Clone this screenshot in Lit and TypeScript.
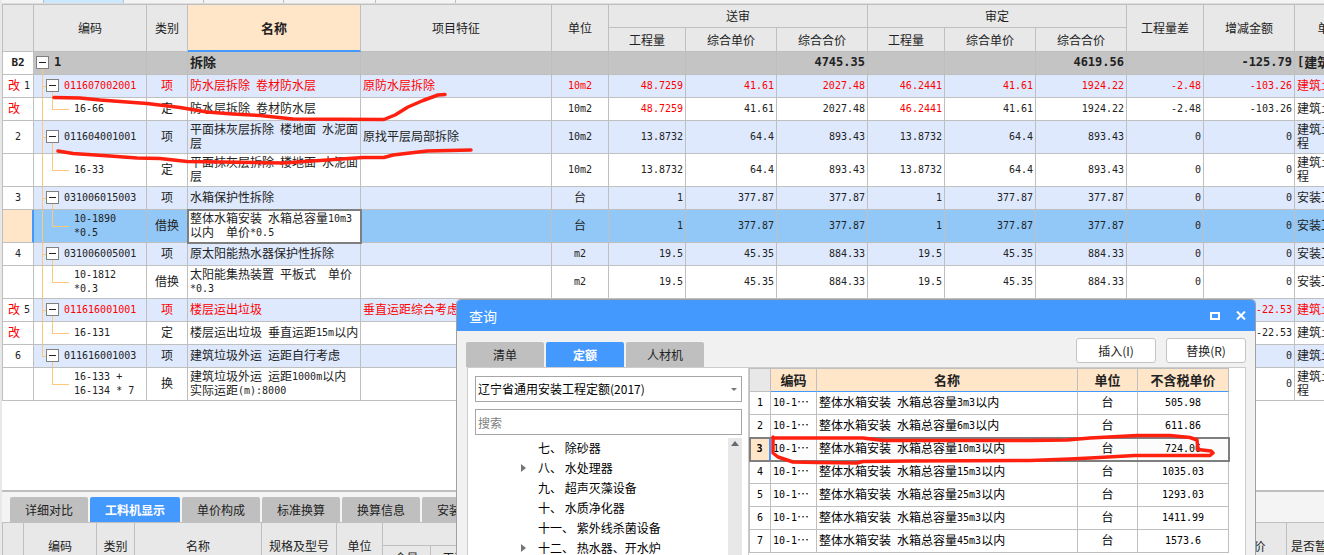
import { LitElement, html, css, svg, nothing } from "lit";
import { customElement, property, state } from "lit/decorators.js";
import { classMap } from "lit/directives/class-map.js";

/** Splits a label into Latin and Chinese runs so that Latin glyphs take half a Chinese cell. */
function mixed(text: string) {
  return text
    .split(/([\x21-\x7e\x20]+)/)
    .filter((part) => part !== "")
    .map((part) => (/^[\x20-\x7e]+$/.test(part) ? html`<span class="half">${part}</span>` : part));
}

interface Row {
  kind: "group" | "item" | "leaf";
  no: string;
  changed?: boolean;
  code: string;
  type: string;
  name: string;
  feature?: string;
  unit?: string;
  values: string[];
  file: string;
  red?: boolean;
  redCols?: number[];
  selected?: boolean;
  last?: boolean;
}

const ROWS: Row[] = [
  { kind: "group", no: "B2", code: "1", type: "", name: "拆除", values: ["", "", "4745.35", "", "", "4619.56", "", "-125.79"], file: "[建筑土建工程]" },
  { kind: "item", no: "1", changed: true, code: "011607002001", type: "项", name: "防水层拆除 卷材防水层", feature: "原防水层拆除", unit: "10m2", values: ["48.7259", "41.61", "2027.48", "46.2441", "41.61", "1924.22", "-2.48", "-103.26"], file: "建筑土建工程", red: true },
  { kind: "leaf", no: "", changed: true, code: "16-66", type: "定", name: "防水层拆除 卷材防水层", unit: "10m2", values: ["48.7259", "41.61", "2027.48", "46.2441", "41.61", "1924.22", "-2.48", "-103.26"], file: "建筑土建工程", redCols: [0, 3] },
  { kind: "item", no: "2", code: "011604001001", type: "项", name: "平面抹灰层拆除 楼地面 水泥面\n层", feature: "原找平层局部拆除", unit: "10m2", values: ["13.8732", "64.4", "893.43", "13.8732", "64.4", "893.43", "0", "0"], file: "建筑土建工\n程" },
  { kind: "leaf", no: "", code: "16-33", type: "定", name: "平面抹灰层拆除 楼地面 水泥面\n层", unit: "10m2", values: ["13.8732", "64.4", "893.43", "13.8732", "64.4", "893.43", "0", "0"], file: "建筑土建工\n程" },
  { kind: "item", no: "3", code: "031006015003", type: "项", name: "水箱保护性拆除", unit: "台", values: ["1", "377.87", "377.87", "1", "377.87", "377.87", "0", "0"], file: "安装工程" },
  { kind: "leaf", no: "", code: "10-1890\n*0.5", type: "借换", name: "整体水箱安装 水箱总容量10m3\n以内  单价*0.5", unit: "台", values: ["1", "377.87", "377.87", "1", "377.87", "377.87", "0", "0"], file: "安装工程", selected: true },
  { kind: "item", no: "4", code: "031006005001", type: "项", name: "原太阳能热水器保护性拆除", unit: "m2", values: ["19.5", "45.35", "884.33", "19.5", "45.35", "884.33", "0", "0"], file: "安装工程" },
  { kind: "leaf", no: "", code: "10-1812\n*0.3", type: "借换", name: "太阳能集热装置 平板式  单价\n*0.3", unit: "m2", values: ["19.5", "45.35", "884.33", "19.5", "45.35", "884.33", "0", "0"], file: "安装工程" },
  { kind: "item", no: "5", changed: true, code: "011616001001", type: "项", name: "楼层运出垃圾", feature: "垂直运距综合考虑", values: ["", "", "", "", "", "", "", "-22.53"], file: "建筑土建工程", red: true },
  { kind: "leaf", no: "", changed: true, code: "16-131", type: "定", name: "楼层运出垃圾 垂直运距15m以内", values: ["", "", "", "", "", "", "", "-22.53"], file: "建筑土建工程" },
  { kind: "item", no: "6", code: "011616001003", type: "项", name: "建筑垃圾外运 运距自行考虑", values: ["", "", "", "", "", "", "", "0"], file: "建筑土建工程", last: true },
  { kind: "leaf", no: "", code: "16-133 +\n16-134 * 7", type: "换", name: "建筑垃圾外运 运距1000m以内\n实际运距(m):8000", values: ["", "", "", "", "", "", "", "0"], file: "建筑土建工\n程", last: true },
];

const tableStyles = css`
  :host {
    display: block;
    font: 12px/14px "Noto Sans CJK SC", sans-serif;
    color: #222;
  }
  * {
    box-sizing: border-box;
  }
  .half {
    font-family: "DejaVu Sans Mono", monospace;
    font-size: 10px;
    line-height: 10px;
    vertical-align: 1px;
  }
  table {
    table-layout: fixed;
    border-collapse: separate;
    border-spacing: 0;
    border: 0 solid #bfbfbf;
    border-width: 1px 0 0 1px;
  }
  th,
  td {
    height: 23px;
    padding: 1px 2px 3px;
    border: 0 solid #bfbfbf;
    border-width: 0 1px 1px 0;
    white-space: pre;
    text-align: center;
    overflow: hidden;
  }
  th {
    padding: 2px;
    background: #e8e8e8;
    font-weight: 400;
  }
  button {
    font: inherit;
    color: inherit;
    padding: 0;
    border: 0;
  }
`;

@customElement("budget-grid")
class BudgetGrid extends LitElement {
  static styles = [
    tableStyles,
    css`
      .w-no { width: 31px; }
      .w-code { width: 113px; }
      .w-type { width: 41px; }
      .w-name { width: 173px; }
      .w-feature { width: 191px; }
      .w-unit { width: 57px; }
      .w-qty { width: 77px; }
      .w-sum { width: 91px; }
      .w-file { width: 70px; }
      table {
        width: 1363px;
      }
      .sub th {
        height: 24px;
      }
      th.current {
        background: #ffe6c8;
        border-bottom: 2px solid #4499ff;
        font-size: 13px;
        font-weight: 700;
      }
      .item td { background-color: #dee9fd; }
      .group td {
        background-color: #c4c4c4;
        font-size: 13px;
        font-weight: 700;
      }
      .group .half {
        font-size: 12px;
        line-height: 12px;
      }
      .group td.no .half { font-size: 11px; }
      .selected td { background-color: #92c8f7; }
      td.no { background-color: #fff; }
      .selected td.no {
        background-color: #ffe6c8;
        border-right: 2px solid #4499ff;
      }
      .selected td.name {
        background-color: #fff;
        outline: 2px solid #7f7f7f;
        outline-offset: -1px;
      }
      .marks {
        display: grid;
        grid-template-columns: 1fr;
        align-items: center;
      }
      .marks.changed {
        grid-template-columns: 18px 1fr;
      }
      .mark,
      .red { color: #f00; }
      .left { text-align: left; }
      .num { text-align: right; }
      .node {
        display: flex;
        align-items: center;
        gap: 5px;
        text-align: left;
      }
      .item .node { padding-left: 10px; }
      .leaf .node { padding-left: 38px; }
      td.code {
        background-repeat: no-repeat;
      }
      .group td.code {
        background-image: linear-gradient(#ffc878, #ffc878);
        background-size: 1px 50%;
        background-position: 8px 100%;
      }
      .item td.code {
        background-image: linear-gradient(#ffc878, #ffc878), linear-gradient(#ffc878, #ffc878), linear-gradient(#ffc878, #ffc878);
        background-size: 1px 100%, 4px 1px, 1px 50%;
        background-position: 8px 0, 8px 50%, 18px 100%;
      }
      .item.last td.code {
        background-size: 1px 50%, 4px 1px, 1px 50%;
      }
      .leaf td.code {
        background-image: linear-gradient(#ffc878, #ffc878), linear-gradient(#ffc878, #ffc878), linear-gradient(#ffc878, #ffc878);
        background-size: 1px 50%, 17px 1px, 1px 100%;
        background-position: 18px 0, 18px 50%, 8px 0;
      }
      .leaf.last td.code {
        background-size: 1px 50%, 17px 1px, 0 0;
      }
      .toggle {
        flex: none;
        width: 13px;
        height: 13px;
        display: grid;
        place-items: center;
        background: #fff;
        border: 1px solid #808080;
      }
      .toggle::before {
        content: "";
        width: 7px;
        height: 1px;
        background: #222;
      }
    `,
  ];

  private renderRow(r: Row) {
    const rowClass = classMap({ [r.kind]: true, selected: !!r.selected, last: !!r.last });
    const tone = r.red ? "red" : "";
    return html`<tr class=${rowClass}>
      <td class="no"><div class=${classMap({ marks: true, changed: !!r.changed })}>${r.changed ? html`<span class="mark">改</span>` : nothing}<span>${mixed(r.no)}</span></div></td>
      <td class="code"><div class="node ${tone}">${r.kind === "leaf" ? nothing : html`<button class="toggle" aria-label="折叠 ${r.code}"></button>`}<span>${r.code.split("\n").map((line, i) => [i ? "\n" : "", mixed(line)])}</span></div></td>
      <td class=${tone}>${r.type}</td>
      <td class="name left ${tone}">${mixed(r.name)}</td>
      <td class="left ${tone}">${mixed(r.feature ?? "")}</td>
      <td class=${tone}>${mixed(r.unit ?? "")}</td>
      ${r.values.map((v, i) => html`<td class=${classMap({ num: true, red: !!r.red || !!r.redCols?.includes(i) })}>${mixed(v)}</td>`)}
      <td class="left ${tone}">${mixed(r.file)}</td>
    </tr>`;
  }

  render() {
    return html`<table>
      <colgroup>
        <col class="w-no" /><col class="w-code" /><col class="w-type" /><col class="w-name" /><col class="w-feature" /><col class="w-unit" />
        <col class="w-qty" /><col class="w-sum" /><col class="w-sum" /><col class="w-qty" /><col class="w-sum" /><col class="w-sum" />
        <col class="w-qty" /><col class="w-sum" /><col class="w-file" />
      </colgroup>
      <thead>
        <tr>
          <th rowspan="2"></th>
          <th rowspan="2">编码</th>
          <th rowspan="2">类别</th>
          <th rowspan="2" class="current">名称</th>
          <th rowspan="2">项目特征</th>
          <th rowspan="2">单位</th>
          <th colspan="3">送审</th>
          <th colspan="3">审定</th>
          <th rowspan="2">工程量差</th>
          <th rowspan="2">增减金额</th>
          <th rowspan="2">单价</th>
        </tr>
        <tr class="sub">
          <th>工程量</th><th>综合单价</th><th>综合合价</th>
          <th>工程量</th><th>综合单价</th><th>综合合价</th>
        </tr>
      </thead>
      <tbody>${ROWS.map((r) => this.renderRow(r))}</tbody>
    </table>`;
  }
}

@customElement("tab-strip")
class TabStrip extends LitElement {
  @property({ attribute: false }) tabs: string[] = [];
  @property({ type: Number }) active = 0;
  @property({ type: Boolean, reflect: true }) grow = false;

  static styles = css`
    :host {
      display: flex;
      gap: 2px;
    }
    .tab {
      flex: none;
      width: 78px;
      height: 25px;
      padding: 0;
      border: 0;
      border-radius: 2px 2px 0 0;
      background: #bfbfbf;
      color: #222;
      font: 12px/16px "Noto Sans CJK SC", sans-serif;
    }
    .tab.active {
      background: #4499ff;
      color: #fff;
      font-weight: 700;
    }
    :host([grow]) .tab.active {
      width: 90px;
    }
  `;

  render() {
    return html`${this.tabs.map(
      (t, i) => html`<button class=${classMap({ tab: true, active: i === this.active })} @click=${() => (this.active = i)}>${t}</button>`,
    )}`;
  }
}

@customElement("resource-grid")
class ResourceGrid extends LitElement {
  static styles = [
    tableStyles,
    css`
      .w21 { width: 21px; }
      .w73 { width: 73px; }
      .w38 { width: 38px; }
      .w127 { width: 127px; }
      .w75 { width: 75px; }
      .w46 { width: 46px; }
      .w48 { width: 48px; }
      .wide { width: 706px; }
      .w102 { width: 102px; }
      .w57 { width: 57px; }
      table {
        width: 1342px;
      }
      .sub th {
        height: 24px;
      }
    `,
  ];

  render() {
    return html`<table>
      <colgroup>
        <col class="w21" /><col class="w73" /><col class="w38" /><col class="w127" /><col class="w75" /><col class="w46" />
        <col class="w48" /><col class="w48" /><col class="wide" /><col class="w102" /><col class="w57" />
      </colgroup>
      <thead>
        <tr>
          <th rowspan="2"></th>
          <th rowspan="2">编码</th>
          <th rowspan="2">类别</th>
          <th rowspan="2">名称</th>
          <th rowspan="2">规格及型号</th>
          <th rowspan="2">单位</th>
          <th colspan="2"></th>
          <th rowspan="2"></th>
          <th rowspan="2">含税市场价</th>
          <th rowspan="2">是否暂估</th>
        </tr>
        <tr class="sub"><th>含量</th><th>工程</th></tr>
      </thead>
    </table>`;
  }
}

const QUOTAS: [string, string][] = [
  ["3", "505.98"],
  ["6", "611.86"],
  ["10", "724.06"],
  ["15", "1035.03"],
  ["25", "1293.03"],
  ["35", "1411.99"],
  ["45", "1573.6"],
];

@customElement("quota-grid")
class QuotaGrid extends LitElement {
  @state() private current = 2;

  static styles = [
    tableStyles,
    css`
      :host { color: #000; }
      table { width: 480px; }
      .w-no { width: 21px; }
      .w-code { width: 46px; }
      .w-unit { width: 60px; }
      .w-price { width: 91px; }
      th {
        background: #ffe6c8;
        border-bottom-color: #4499ff;
        color: #222;
        font-size: 13px;
        font-weight: 700;
      }
      th.corner {
        background: #e8e8e8;
        border-bottom-color: #bfbfbf;
      }
      .left { text-align: left; }
      .current {
        outline: 2px solid #7f7f7f;
        outline-offset: -1px;
      }
      .current td { background: #fcfcfc; }
      .current .no {
        background: #ffe6c8;
        border-right: 2px solid #4499ff;
        font-weight: 700;
      }
    `,
  ];

  render() {
    return html`<table>
      <colgroup><col class="w-no" /><col class="w-code" /><col /><col class="w-unit" /><col class="w-price" /></colgroup>
      <thead>
        <tr><th class="corner"></th><th>编码</th><th>名称</th><th>单位</th><th>不含税单价</th></tr>
      </thead>
      <tbody>
        ${QUOTAS.map(
          ([size, price], i) => html`<tr class=${classMap({ current: i === this.current })} @click=${() => (this.current = i)}>
            <td class="no">${mixed(String(i + 1))}</td>
            <td class="left">${mixed("10-1⋯")}</td>
            <td class="left">${mixed(`整体水箱安装 水箱总容量${size}m3以内`)}</td>
            <td>台</td>
            <td>${mixed(price)}</td>
          </tr>`,
        )}
      </tbody>
    </table>`;
  }
}

const CHAPTERS = [
  { text: "七、 除砂器" },
  { text: "八、 水处理器", branch: true },
  { text: "九、 超声灭藻设备" },
  { text: "十、 水质净化器" },
  { text: "十一、 紫外线杀菌设备" },
  { text: "十二、 热水器、开水炉", branch: true },
];

@customElement("query-dialog")
class QueryDialog extends LitElement {
  static styles = css`
    :host {
      display: flex;
      flex-direction: column;
      box-sizing: border-box;
      overflow: hidden;
      border: 1px solid #a0a0a0;
      border-bottom: 0;
      border-radius: 5px 5px 0 0;
      background: #f1f1f1;
      font: 12px/16px "Noto Sans CJK SC", sans-serif;
      color: #000;
    }
    * { box-sizing: border-box; }
    .title {
      flex: none;
      display: flex;
      align-items: center;
      height: 31px;
      padding: 0 8px 0 12px;
      background: #4499ff;
      color: #fff;
      font-size: 14px;
    }
    .title span { flex: 1; }
    .title button {
      display: grid;
      place-items: center;
      width: 26px;
      height: 20px;
      padding: 0;
      border: 0;
      background: none;
    }
    .title button + button { width: 12px; margin-left: 7px; }
    .bar {
      flex: none;
      display: flex;
      align-items: flex-end;
      gap: 10px;
      height: 36px;
      padding: 0 9px;
    }
    .bar tab-strip { flex: 1; }
    .action {
      width: 80px;
      height: 25px;
      margin-bottom: 4px;
      padding: 0;
      border: 1px solid #c4c4c4;
      border-radius: 3px;
      background: #fff;
      color: #222;
      font: inherit;
    }
    .body {
      flex: 1;
      min-height: 0;
      display: flex;
      margin: 0 9px 0 10px;
      border: 1px solid #ccc;
      border-bottom: 0;
      background: #fff;
    }
    .side {
      flex: 1;
      min-width: 0;
      display: flex;
      flex-direction: column;
      padding: 8px 6px 0 7px;
      border-right: 1px solid #ccc;
    }
    .pick { display: grid; margin-bottom: 7px; }
    .pick select,
    .pick svg { grid-area: 1 / 1; }
    .pick svg {
      align-self: center;
      justify-self: end;
      margin-right: 5px;
      pointer-events: none;
    }
    .field {
      width: 100%;
      height: 26px;
      padding: 0 2px;
      border: 1px solid #a6a6a6;
      border-radius: 0;
      background: #fff;
      color: #000;
      font: inherit;
      appearance: none;
      outline: 0;
    }
    .field::placeholder { color: #808080; }
    .list {
      flex: 1;
      min-height: 0;
      display: flex;
      margin-top: 3px;
    }
    .tree {
      flex: 1;
      margin: 0;
      padding: 0 0 0 46px;
      list-style: none;
    }
    .tree li {
      display: grid;
      grid-template-columns: 17px 1fr;
      align-items: center;
      height: 20px;
      white-space: pre;
    }
    .track {
      width: 14px;
      padding-top: 3px;
      background: #e8e8e8;
      display: flex;
      justify-content: center;
    }
    quota-grid { flex: 0 0 496px; }
  `;

  render() {
    return html`
      <div class="title">
        <span>查询</span>
        <button aria-label="最大化"><svg width="10" height="8"><rect x="1" y="1" width="8" height="6" fill="none" stroke="#fff" stroke-width="2" /></svg></button>
        <button aria-label="关闭"><svg width="10" height="9"><path d="M1 .5 9 8.5M9 .5 1 8.5" stroke="#fff" stroke-width="2" /></svg></button>
      </div>
      <div class="bar">
        <tab-strip .tabs=${["清单", "定额", "人材机"]} .active=${1}></tab-strip>
        <button class="action">插入(I)</button>
        <button class="action">替换(R)</button>
      </div>
      <div class="body">
        <div class="side">
          <div class="pick">
            <select class="field" aria-label="定额库"><option>辽宁省通用安装工程定额(2017)</option></select>
            <svg width="6" height="3"><path d="M0 0H6L3 3Z" fill="#777" /></svg>
          </div>
          <input class="field" type="text" placeholder="搜索" aria-label="搜索" />
          <div class="list">
            <ul class="tree">
              ${CHAPTERS.map(
                (c) => html`<li>${c.branch ? html`<svg width="5" height="8"><path d="M0 0 5 4 0 8Z" fill="#777" /></svg>` : html`<i></i>`}<span>${c.text}</span></li>`,
              )}
            </ul>
            <div class="track"><svg width="8" height="5"><path d="M4 0 8 5H0Z" fill="#666a70" /></svg></div>
          </div>
        </div>
        <quota-grid></quota-grid>
      </div>
    `;
  }
}

/** Freehand pen strokes laid over the sheet. */
const STROKES = [
  "M54 97.5 80 98 100 100 147 103.5 180 107.5 207 112 233 114 260 115.5 293 119 384 119.5 395 115 408 107 423 100.5 438 95 445 94.5",
  "M58 151 73 153.5 110 156 137 158 160 158.5 187 161.5 283 163 320 160.5 363 157.5 384 157.5 393 155 427 151 471 150",
  "M773 437V453L778 457 793 462 817 462.5 857 463 863 461.5 910 461 1030 460.5 1070 459 1090 458 1135 455.5H1210L1213 453 1211 451 1198 449.5 1197 440 1190 437.5 1170 435.5H1137L1090 438 1067 440 1030 440.5H883L863 438H775",
];

@customElement("app-root")
class AppRoot extends LitElement {
  static styles = css`
    * {
      box-sizing: border-box;
    }
    :host {
      position: relative;
      display: flex;
      flex-direction: column;
      height: 100vh;
      overflow: hidden;
      padding-left: 2px;
      box-sizing: border-box;
      background: #e8e8e8;
    }
    .strip {
      flex: none;
      display: flex;
      height: 4px;
      background: #f4f4f4;
      border-bottom: 1px solid #dcdcdc;
    }
    .strip i {
      flex: none;
      width: 80px;
      border-right: 1px solid #bfbfbf;
    }
    .strip .first { width: 42px; }
    .strip .wide { width: 92px; }
    .strip .on { background: #cce8ff; }
    .sheet {
      flex: 1;
      min-height: 0;
      overflow: hidden;
      background: #fff;
    }
    .panel {
      flex: 0 0 65px;
      overflow: hidden;
      border-top: 2px solid #bfbfbf;
      background: #f4f4f4;
    }
    .panel tab-strip { padding: 5px 8px 0; }
    query-dialog {
      position: absolute;
      left: 456px;
      top: 299px;
      bottom: 0;
      width: 800px;
    }
    .ink {
      position: absolute;
      left: 0;
      top: 0;
      width: 100%;
      height: 100%;
      pointer-events: none;
      fill: none;
      stroke: #ff2010;
      stroke-width: 3.5;
      stroke-linecap: round;
      stroke-linejoin: round;
    }
  `;

  render() {
    return html`
      <div class="strip"><i class="first"></i><i class="on"></i><i></i><i></i><i class="wide"></i><i></i></div>
      <div class="sheet"><budget-grid></budget-grid></div>
      <div class="panel">
        <tab-strip grow .tabs=${["详细对比", "工料机显示", "单价构成", "标准换算", "换算信息", "安装费用"]} .active=${1}></tab-strip>
        <resource-grid></resource-grid>
      </div>
      <query-dialog></query-dialog>
      <svg class="ink" aria-hidden="true">${STROKES.map((d) => svg`<path d=${d} />`)}</svg>
    `;
  }
}
